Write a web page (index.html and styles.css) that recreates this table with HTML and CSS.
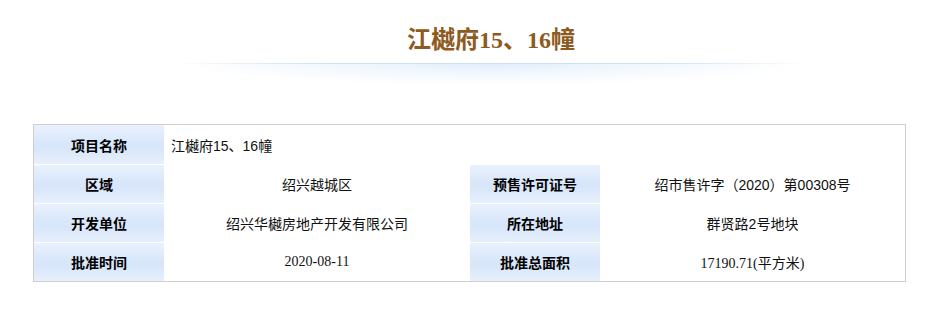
FILE: index.html
```html
<!DOCTYPE html>
<html lang="zh-CN">
<head>
<meta charset="utf-8">
<title>江樾府15、16幢</title>
<link rel="stylesheet" href="styles.css">
</head>
<body>
<div class="head">
  <h1 class="title">江樾府15、16幢</h1>
  <div class="glow"></div>
</div>
<div class="info">
  <div class="lab">项目名称</div>
  <div class="val left span3">江樾府15、16幢</div>

  <div class="lab">区域</div>
  <div class="val">绍兴越城区</div>
  <div class="lab">预售许可证号</div>
  <div class="val">绍市售许字（2020）第00308号</div>

  <div class="lab">开发单位</div>
  <div class="val">绍兴华樾房地产开发有限公司</div>
  <div class="lab">所在地址</div>
  <div class="val">群贤路2号地块</div>

  <div class="lab">批准时间</div>
  <div class="val serif">2020-08-11</div>
  <div class="lab">批准总面积</div>
  <div class="val serif">17190.71(平方米)</div>
</div>
</body>
</html>
```
FILE: styles.css
```css
html, body {
  margin: 0;
  padding: 0;
  background: #fff;
}
body {
  font-family: "Liberation Sans", "Noto Sans CJK SC", sans-serif;
  color: #000;
}
.head {
  margin-left: 36px;
  padding-top: 25px;
  display: flex;
  flex-direction: column;
  align-items: center;
}
.title {
  margin: 0;
  font-family: "Liberation Serif", "Noto Sans CJK SC", serif;
  font-weight: bold;
  font-size: 24px;
  line-height: 30px;
  color: #8e5a1e;
}
.glow {
  margin-top: 8px;
  width: 632px;
  height: 22px;
  background:
    linear-gradient(90deg, rgba(205,225,242,0) 0%, rgba(205,225,242,1) 25%, rgba(205,225,242,1) 75%, rgba(205,225,242,0) 100%) top / 100% 1px no-repeat,
    radial-gradient(ellipse 50% 100% at 50% 0%, rgba(222,236,250,0.95) 0%, rgba(232,242,252,0.6) 45%, rgba(255,255,255,0) 100%);
}
.info {
  margin: 39px 0 0 33px;
  width: 871px;
  border: 1px solid #cfcfcf;
  display: grid;
  grid-template-columns: 130px 306px 130px 305px;
  grid-template-rows: 39px 38px 38px 38px;
  row-gap: 1px;
  background: #fff;
}
.lab {
  background: linear-gradient(180deg, #e9f1fd 0%, #d9e7fb 45%, #d7e6fa 60%, #e7f0fd 100%);
  font-weight: bold;
  font-size: 14px;
  display: flex;
  align-items: center;
  justify-content: center;
  font-family: "Noto Sans CJK SC", sans-serif;
}
.val {
  font-size: 14px;
  display: flex;
  align-items: center;
  justify-content: center;
  font-family: "Liberation Sans", "Noto Sans CJK SC", sans-serif;
  color: #111;
}
.val.left {
  justify-content: flex-start;
  padding-left: 7px;
}
.span3 {
  grid-column: span 3;
}
.val.serif {
  font-family: "Liberation Serif", "Noto Sans CJK SC", serif;
  font-size: 14px;
}
```
